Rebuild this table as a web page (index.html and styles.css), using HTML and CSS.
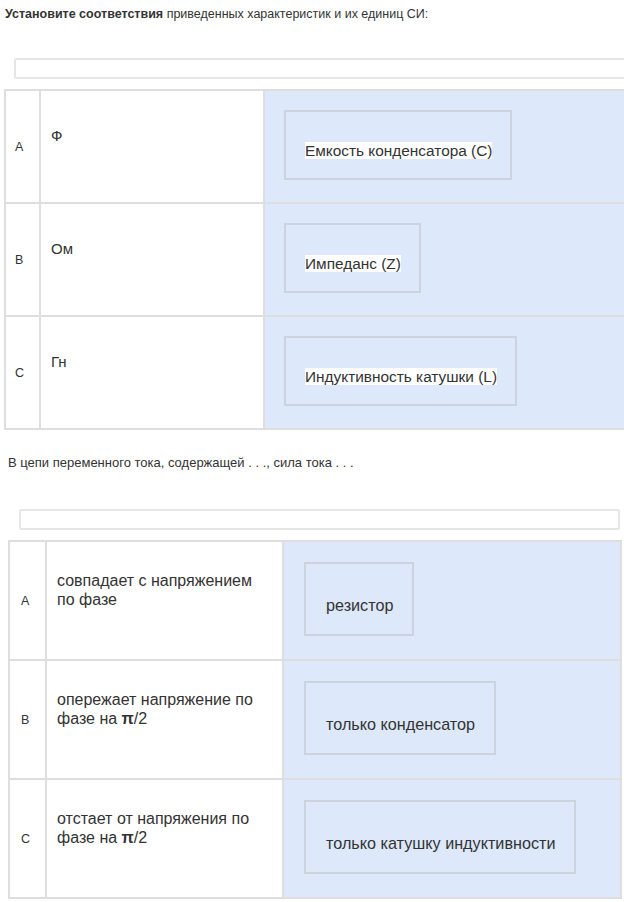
FILE: index.html
```html
<!DOCTYPE html>
<html lang="ru">
<head>
  <meta charset="UTF-8" />
  <title>Установите соответствия</title>
  <link rel="stylesheet" href="styles.css">
</head>
<body>

<div class="page">
  <div class="question q1">
    <p class="title"><b>Установите соответствия</b> приведенных характеристик и их единиц СИ:</p>
    <div class="answer-line"></div>
    <table class="match">
      <colgroup>
        <col class="c-letter">
        <col class="c-left">
        <col class="c-right">
      </colgroup>
      <tr>
        <td class="letter">A</td>
        <td class="left">Ф</td>
        <td class="right"><div class="drop"><span class="mark">Емкость конденсатора (С)</span></div></td>
      </tr>
      <tr>
        <td class="letter">B</td>
        <td class="left">Ом</td>
        <td class="right"><div class="drop"><span class="mark">Импеданс (Z)</span></div></td>
      </tr>
      <tr>
        <td class="letter">C</td>
        <td class="left">Гн</td>
        <td class="right"><div class="drop"><span class="mark">Индуктивность катушки (L)</span></div></td>
      </tr>
    </table>
  </div>

  <div class="question q2">
    <p class="title">В цепи переменного тока, содержащей . . ., сила тока . . .</p>
    <div class="answer-line"></div>
    <table class="match">
      <colgroup>
        <col class="c-letter">
        <col class="c-left">
        <col class="c-right">
      </colgroup>
      <tr>
        <td class="letter">A</td>
        <td class="left">совпадает с напряжением<br>по фазе</td>
        <td class="right"><div class="drop">резистор</div></td>
      </tr>
      <tr>
        <td class="letter">B</td>
        <td class="left">опережает напряжение по<br>фазе на <b>π</b>/2</td>
        <td class="right"><div class="drop">только конденсатор</div></td>
      </tr>
      <tr>
        <td class="letter">C</td>
        <td class="left">отстает от напряжения по<br>фазе на <b>π</b>/2</td>
        <td class="right"><div class="drop">только катушку индуктивности</div></td>
      </tr>
    </table>
  </div>
</div>

</body>
</html>
```

FILE: styles.css
```css
body {
  margin: 0;
  font-family: "Liberation Sans", Arial, sans-serif;
  color: #333;
  background: #fff;
}
.page {
  width: 624px;
  overflow: hidden;
}
.title {
  margin: 0;
}
.answer-line {
  height: 17px;
  border: 2px solid #e6e6e6;
  border-radius: 2px;
}
.match {
  border-collapse: collapse;
  table-layout: fixed;
}
.match td {
  border: 2px solid #dedede;
  padding: 0;
}
.match .letter {
  font-size: 12.5px;
  vertical-align: middle;
}
.match .left {
  vertical-align: top;
  background: #fff;
}
.match .right {
  background: #dde9fb;
  vertical-align: top;
}
.drop {
  display: inline-block;
  border: 2px solid #cdd3dc;
}
.mark {
  background: #fff;
}

/* first question */
.q1 {
  padding-top: 7px;
}
.q1 .title {
  padding-left: 5px;
  font-size: 12.5px;
  line-height: 15px;
}
.q1 .answer-line {
  margin: 36px 0 0 14px;
  width: 640px;
}
.q1 .match {
  margin: 10px 0 0 4px;
  width: 680px;
}
.q1 .c-letter {
  width: 35px;
}
.q1 .c-left {
  width: 224px;
}
.q1 .letter {
  padding-left: 9px;
}
.q1 .left {
  padding: 36px 10px 0;
  font-size: 15px;
  line-height: 18px;
}
.q1 .right {
  padding: 19px 19px 22px;
}
.q1 .drop {
  font-size: 15.4px;
  line-height: 18px;
  padding: 30px 18px 18px 19px;
}

/* second question */
.q2 {
  padding-top: 25px;
}
.q2 .title {
  padding-left: 8px;
  font-size: 13px;
  line-height: 15px;
}
.q2 .answer-line {
  margin: 39px 0 0 19px;
  width: 597px;
}
.q2 .match {
  margin: 10px 0 0 8px;
  width: 614px;
}
.q2 .c-letter {
  width: 37px;
}
.q2 .c-left {
  width: 237px;
}
.q2 .letter {
  padding-left: 11px;
}
.q2 .left {
  padding: 29px 10px 0;
  font-size: 16px;
  line-height: 19px;
}
.q2 .right {
  padding: 20px 20px 23px;
}
.q2 .drop {
  font-size: 16.2px;
  line-height: 19px;
  padding: 32px 19px 19px 20px;
}
```
